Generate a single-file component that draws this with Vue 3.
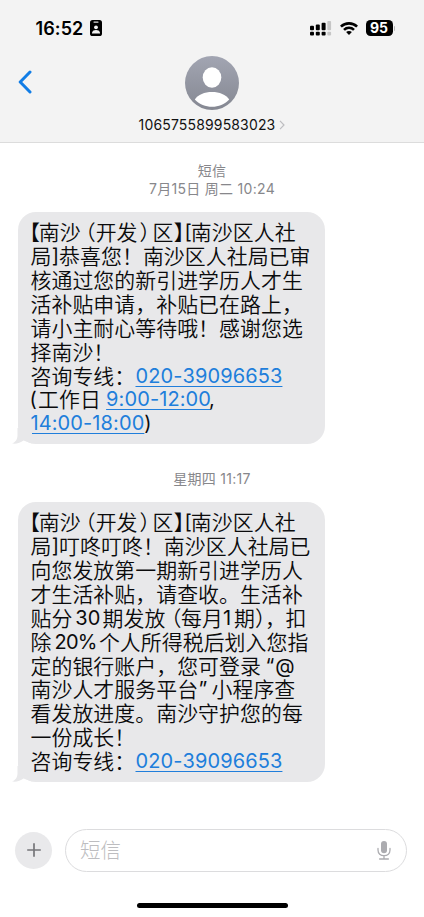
<script setup>
// Every run is [start offset in the line, text, kind]
const first = [
  [[-1, '【', 'half'], [8.2, '南沙'], [54.8, '（', 'half'], [65.2, '开发'], [109, '）', 'half'], [122, '区'], [143.4, '】', 'half'], [154, '[', 'lat'], [160.4, '南沙区人社']],
  [[0, '局'], [21.2, ']', 'lat'], [28.6, '恭喜您！南沙区人社局已审']],
  [[0, '核通过您的新引进学历人才生']],
  [[0, '活补贴申请，补贴已在路上，']],
  [[0, '请小主耐心等待哦！感谢您选']],
  [[0, '择南沙！']],
  [[0, '咨询专线：'], [105, '020-39096653', 'link']],
  [[-1, '(', 'lat'], [7.6, '工作日'], [75.6, '9:00-12:00', 'link'], [178.5, ',', 'lat']],
  [[0, '14:00-18:00', 'link'], [113.8, ')', 'lat']],
]
const second = [
  first[0],
  [[0, '局'], [21.2, ']', 'lat'], [28.6, '叮咚叮咚！南沙区人社局已']],
  [[0, '向您发放第一期新引进学历人']],
  [[0, '才生活补贴，请查收。生活补']],
  [[0, '贴分'], [44.8, '30', 'lat'], [72, '期发放'], [140.5, '（', 'half'], [150.5, '每月'], [192.5, '1', 'lat'], [203.4, '期'], [224.5, '）', 'half'], [234.5, '，', 'half'], [255, '扣']],
  [[0, '除'], [24, '20%', 'lat tight'], [68.4, '个人所得税后划入您指']],
  [[0, '定的银行账户，您可登录'], [235, '“', 'lat'], [244.8, '@', 'lat']],
  [[0, '南沙人才服务平台'], [168, '”', 'lat'], [181, '小程序查']],
  [[0, '看发放进度。南沙守护您的每']],
  [[0, '一份成长！']],
  [[0, '咨询专线：'], [105, '020-39096653', 'link']],
]
const threads = [
  { id: 'a', stamp: ['短信', '7月15日 周二 10:24'], lines: first },
  { id: 'b', stamp: ['星期四 11:17'], lines: second },
]
const lead = (line) => ({ marginLeft: line[0][0] + 'px' })
const span = (line, i) => (i < line.length - 1 ? { width: line[i + 1][0] - line[i][0] + 'px' } : {})
</script>

<template>
  <div class="phone">
    <header class="head">
      <div class="status">
        <span class="time">16:52</span>
        <svg class="badge" viewBox="0 0 12 16">
          <rect width="12" height="16" rx="2.6" fill="#000" />
          <rect x="3.4" y="1.5" width="5.2" height="1.2" rx=".6" fill="#ddd" />
          <circle cx="6" cy="7.3" r="1.9" fill="#f3f3f3" />
          <path d="M2 13.4V12.6C2.5 10.8 4 10 6 10s3.500.8 4 2.600v.8z" fill="#f3f3f3" />
        </svg>
        <svg class="signal" viewBox="0 0 22 15">
          <g fill="#000">
            <rect x="0" y="4.800" width="4" height="4.500" rx="1" /><rect x="5.800" y="3.500" width="4" height="5.800" rx="1" /><rect x="11.600" y="1.800" width="4" height="7.500" rx="1" />
            <rect x="0" y="10.800" width="4" height="3.600" rx="1" /><rect x="5.800" y="10.800" width="4" height="3.600" rx="1" /><rect x="11.600" y="10.800" width="4" height="3.600" rx="1" />
          </g>
          <g fill="#c6c6c6"><rect x="17.300" y="0" width="3.800" height="9.300" rx="1" /><rect x="17.300" y="10.800" width="3.800" height="3.600" rx="1" /></g>
        </svg>
        <svg class="wifi" viewBox="0 0 18 13">
          <g fill="none" stroke="#000" stroke-width="2.600">
            <path d="M.9 4.700C5.400.2 12.600.2 17.100 4.700" /><path d="M4 7.900C6.800 5.100 11.200 5.100 14 7.900" />
          </g>
          <path d="M9 13 6.100 10.100C7.700 8.700 10.300 8.700 11.900 10.100z" />
        </svg>
        <span class="battery">95</span>
        <i class="cap"></i>
      </div>
      <svg class="back" viewBox="0 0 14 24"><path d="M12 2 2.200 12 12 22" fill="none" stroke="#117de6" stroke-width="3" stroke-linecap="round" stroke-linejoin="round" /></svg>
      <div class="contact">
        <svg class="avatar" viewBox="0 0 54 54">
          <defs>
            <linearGradient id="sky" x1="0" y1="0" x2="0" y2="1"><stop offset="0" stop-color="#a2a5b2" /><stop offset="1" stop-color="#858892" /></linearGradient>
          </defs>
          <circle cx="27" cy="27" r="27" fill="url(#sky)" />
          <ellipse cx="27" cy="21.500" rx="9.300" ry="10.300" fill="#fff" />
          <path d="M9.800 43.500C13 38.500 19.500 36 27 36s14 2.500 17.200 7.500C39.500 48.500 33.500 50.800 27 50.800S14.500 48.500 9.800 43.500z" fill="#fff" />
        </svg>
        <div class="name">
          <span>1065755899583023</span>
          <svg viewBox="0 0 6 10"><path d="M1 .8 5 5 1 9.200" fill="none" stroke="#bdbdc0" stroke-width="1.200" /></svg>
        </div>
      </div>
    </header>

    <main class="chat">
      <section v-for="t in threads" :key="t.id" :class="['thread', t.id]">
        <div class="stamp"><div v-for="s in t.stamp" :key="s">{{ s }}</div></div>
        <div class="bubble">
          <div v-for="(line, n) in t.lines" :key="n" class="line" :style="lead(line)">
            <span v-for="(run, i) in line" :key="i" :class="['run', run[2]]" :style="span(line, i)">{{ run[1] }}</span>
          </div>
          <svg class="tail" viewBox="0 0 20 16"><path d="M5.500 0V7C5.500 11.500 3.500 14 0 15.500 4.500 16 8.500 15 11.500 12.500L20 15.500V0z" fill="#e8e8ea" /></svg>
        </div>
      </section>
    </main>

    <footer class="compose">
      <button class="plus"><svg viewBox="0 0 14 14"><path d="M7 .2V13.800M.2 7H13.800" stroke="#76767a" stroke-width="1.700" /></svg></button>
      <div class="field">
        <span>短信</span>
        <svg viewBox="0 0 14 19">
          <rect x="4" y="0" width="6" height="12.300" rx="3" fill="#acacb0" />
          <path d="M1 7.500V9C1 12.500 3.500 14.700 7 14.700S13 12.500 13 9V7.500M7 14.700V18M2.600 18H11.400" fill="none" stroke="#acacb0" stroke-width="1.300" stroke-linecap="round" />
        </svg>
      </div>
    </footer>
    <div class="home"></div>
  </div>
</template>

<style>
body { background: #fff; }
</style>
<style scoped>
.phone { width: 424px; height: 917px; box-sizing: border-box; overflow: hidden; background: #fff; display: flex; flex-direction: column; font-family: Inter, "Noto Sans CJK SC", sans-serif; color: #0b0b0c; }
.head { height: 143px; box-sizing: border-box; flex: none; background: #f3f3f3; border-bottom: 1px solid #dcdcdc; position: relative; }
.status { display: flex; align-items: center; height: 56px; padding-left: 35.500px; }
.time { font-size: 18px; font-weight: 600; width: 54.500px; line-height: 22px; padding-top: 2px; letter-spacing: .1px; color: #000; }
.badge { width: 12px; height: 16px; }
.signal { width: 22px; height: 15px; margin-left: 208px; }
.wifi { width: 18px; height: 13px; margin-left: 8px; }
.battery { width: 27px; height: 16px; margin-left: 7.500px; border-radius: 4.500px; background: #000; color: #fff; font-size: 14px; line-height: 16px; font-weight: 700; text-align: center; }
.cap { width: 1.500px; height: 5px; margin-left: 1px; border-radius: 0 2px 2px 0; background: #b5b5b5; }
.back { position: absolute; left: 18px; top: 70px; width: 14px; height: 24px; }
.contact { display: flex; flex-direction: column; align-items: center; }
.avatar { width: 54px; height: 54px; }
.name { display: flex; align-items: center; gap: 4px; margin-top: 6px; font-size: 14px; line-height: 18px; height: 18px; letter-spacing: .15px; color: #111; white-space: nowrap; }
.name svg { width: 6px; height: 10px; }
.chat { height: 677px; flex: none; padding-left: 17.500px; }
.stamp { width: 389px; text-align: center; font-size: 14px; line-height: 18px; color: #87878b; letter-spacing: .3px; }
.a .stamp { padding: 19px 0 14px; }
.b .stamp { padding: 26px 0 14.500px; }
.bubble { position: relative; width: 307px; box-sizing: border-box; border-radius: 18px; background: #e8e8ea; padding: 8px 0 0 13px; }
.a .bubble { height: 231.500px; }
.b .bubble { height: 280px; }
.line { display: flex; height: 23.930px; line-height: 23.930px; font-size: 20.900px; white-space: nowrap; }
.run { display: block; flex: none; font-family: "Noto Sans CJK SC", sans-serif; font-weight: 350; font-kerning: none; letter-spacing: .06px; }
.half { font-feature-settings: "halt"; letter-spacing: 0; }
.lat { font-family: Inter, sans-serif; font-size: 20px; font-weight: 400; letter-spacing: 0; padding-top: 1px; box-sizing: border-box; }
.tight { letter-spacing: -.8px; }
.link { font-family: Inter, sans-serif; font-size: 20px; font-weight: 400; color: #207edb; padding-top: 1px; box-sizing: border-box; letter-spacing: .1px; text-decoration: underline; text-decoration-thickness: 1.300px; text-underline-offset: 3px; }
.tail { position: absolute; left: -5.500px; bottom: 0; width: 20px; height: 16px; }
.compose { display: flex; align-items: center; height: 60px; padding-left: 15px; gap: 13px; }
.plus { width: 37px; height: 37px; border: 0; padding: 0; border-radius: 50%; background: #e9e9eb; display: grid; place-items: center; }
.plus svg { width: 14px; height: 14px; }
.field { width: 342px; height: 43px; box-sizing: border-box; border: 1px solid #dcdcde; border-radius: 22px; display: flex; align-items: center; justify-content: space-between; padding: 0 15.500px 0 14px; font-size: 20.500px; font-weight: 300; color: #bdbdc0; font-family: "Noto Sans CJK SC", sans-serif; }
.field span { padding-bottom: 2px; }
.field svg { width: 14px; height: 19px; }
.home { width: 151px; height: 5px; margin: 23px 0 0 137px; border-radius: 3px; background: #000; flex: none; }
</style>
